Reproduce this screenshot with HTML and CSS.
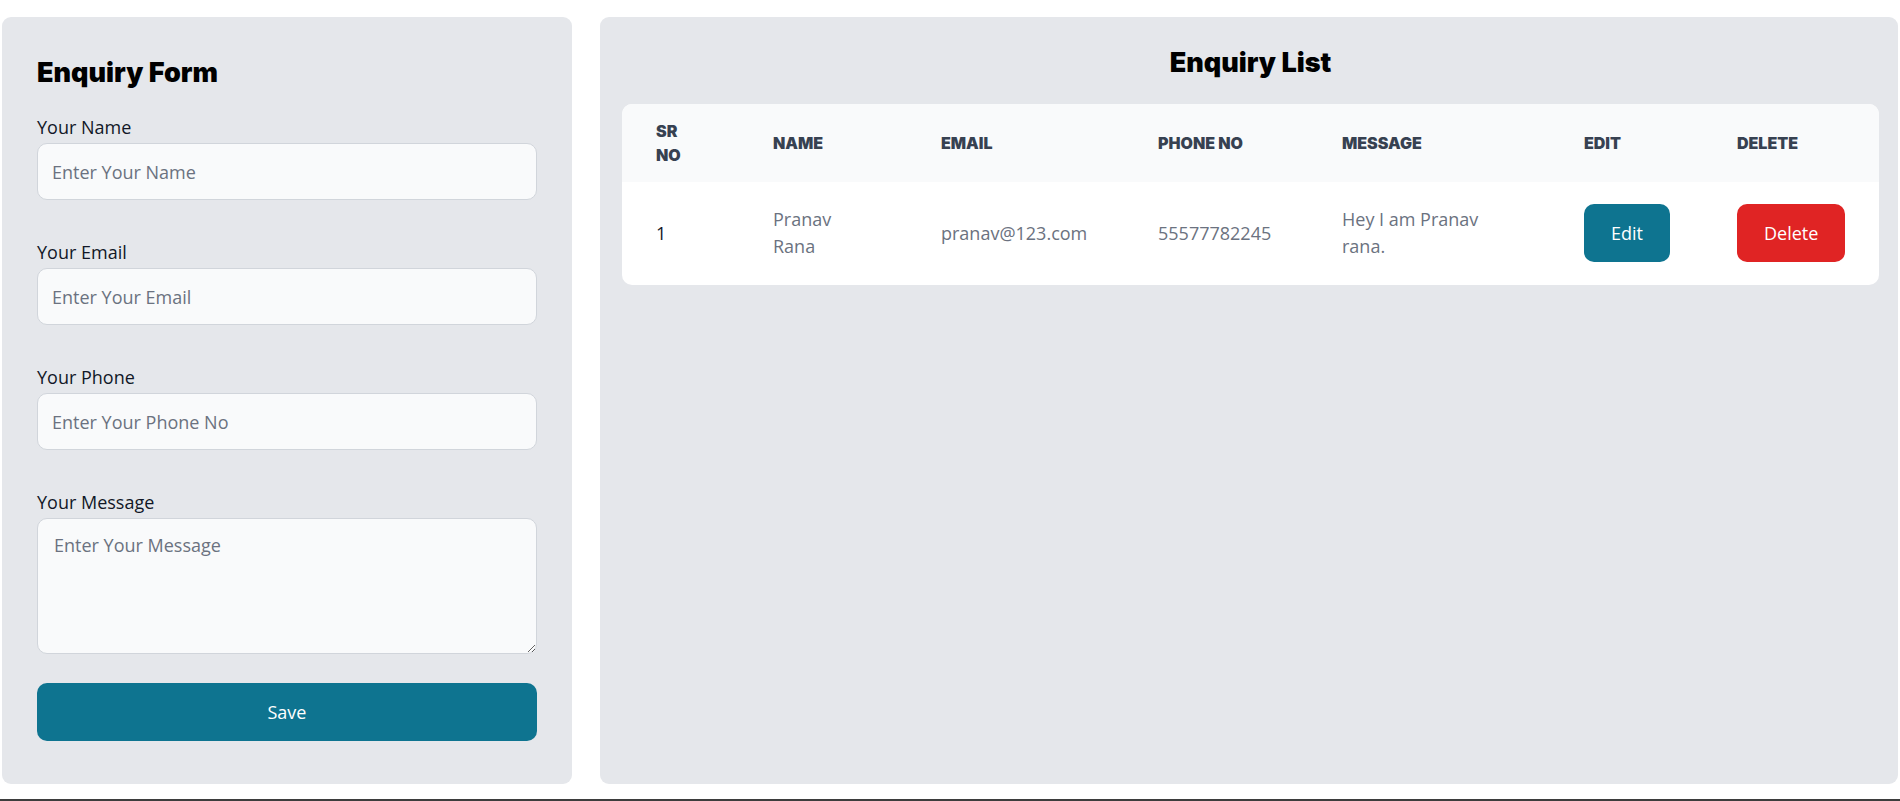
FILE: index.html
```html
<!DOCTYPE html>
<html lang="en">
<head>
<meta charset="utf-8">
<title>Enquiry</title>
<link rel="stylesheet" href="styles.css">
</head>
<body>
<div class="page">
  <section class="card form-card">
    <h2 class="title form-title">Enquiry Form</h2>
    <form class="form">
      <div class="field">
        <label class="label" for="name">Your Name</label>
        <input class="input" id="name" type="text" placeholder="Enter Your Name">
      </div>
      <div class="field">
        <label class="label" for="email">Your Email</label>
        <input class="input" id="email" type="email" placeholder="Enter Your Email">
      </div>
      <div class="field">
        <label class="label" for="phone">Your Phone</label>
        <input class="input" id="phone" type="text" placeholder="Enter Your Phone No">
      </div>
      <div class="field field-last">
        <label class="label" for="msg">Your Message</label>
        <textarea class="textarea" id="msg" placeholder="Enter Your Message"></textarea>
      </div>
      <button type="button" class="btn btn-save">Save</button>
    </form>
  </section>

  <section class="card list-card">
    <h2 class="title list-title">Enquiry List</h2>
    <div class="table-wrap">
      <table class="table">
        <thead>
          <tr>
            <th class="c-sr"><span class="sr-text">SR NO</span></th>
            <th class="c-name">Name</th>
            <th class="c-email">Email</th>
            <th class="c-phone">Phone No</th>
            <th class="c-msg">Message</th>
            <th class="c-edit">Edit</th>
            <th class="c-del">Delete</th>
          </tr>
        </thead>
        <tbody>
          <tr>
            <td class="cell-dark">1</td>
            <td class="cell-name">Pranav Rana</td>
            <td>pranav@123.com</td>
            <td>55577782245</td>
            <td class="cell-msg">Hey I am Pranav rana.</td>
            <td><button type="button" class="btn btn-edit">Edit</button></td>
            <td><button type="button" class="btn btn-delete">Delete</button></td>
          </tr>
        </tbody>
      </table>
    </div>
  </section>
</div>
</body>
</html>
```

FILE: styles.css
```css
html, body {
  margin: 0;
  padding: 0;
  background: #ffffff;
  overflow: hidden;
}

body {
  font-family: "Open Sans", "Noto Sans", sans-serif;
  color: #111827;
}

.page {
  box-sizing: border-box;
  height: 801px;
  display: flex;
  gap: 28px;
  padding: 17px 2px 15px 2px;
  border-bottom: 2px solid #3d3d3d;
}

.card {
  background: #e5e7eb;
  border-radius: 9px;
  box-sizing: border-box;
}

.form-card {
  width: 570px;
  flex: 0 0 570px;
  padding: 40px 35px 0 35px;
}

.list-card {
  flex: 1;
  min-width: 0;
  padding: 30px 19px 0 22px;
}

.title {
  margin: 0;
  font-family: "Inter", "Lato", sans-serif;
  font-weight: 900;
  font-size: 27px;
  line-height: 32px;
  color: #000000;
}

.form-title {
  margin-bottom: 26px;
}

.list-title {
  text-align: center;
  margin-bottom: 25px;
}

.form {
  display: flex;
  flex-direction: column;
}

.field {
  display: flex;
  flex-direction: column;
  margin-bottom: 40px;
}

.field-last {
  margin-bottom: 29px;
}

.label {
  font-size: 18px;
  line-height: 24px;
  margin-bottom: 4px;
  color: #111827;
}

.input,
.textarea {
  box-sizing: border-box;
  width: 500px;
  background: #f9fafb;
  border: 1px solid #d1d5db;
  border-radius: 10px;
  font-family: "Open Sans", "Noto Sans", sans-serif;
  font-size: 18px;
  color: #111827;
  outline: none;
  margin: 0;
}

.input {
  height: 57px;
  padding: 0 14px;
}

.textarea {
  height: 136px;
  padding: 13px 16px;
  line-height: 27px;
  resize: vertical;
}

.input::placeholder,
.textarea::placeholder {
  color: #6b7280;
  opacity: 1;
}

.btn {
  border: none;
  color: #ffffff;
  font-family: "Open Sans", "Noto Sans", sans-serif;
  font-size: 18px;
  border-radius: 10px;
  cursor: pointer;
  margin: 0;
}

.btn-save {
  width: 500px;
  height: 58px;
  background: #0e7490;
}

.btn-edit {
  height: 58px;
  padding: 0 27px;
  background: #0e7490;
}

.btn-delete {
  height: 58px;
  padding: 0 27px;
  background: #e02424;
}

.table-wrap {
  border-radius: 10px;
  overflow: hidden;
  background: #ffffff;
}

.table {
  width: 100%;
  border-collapse: collapse;
  table-layout: fixed;
}

.table th,
.table td {
  box-sizing: border-box;
}

.table th {
  background: #f9fafb;
  color: #374151;
  font-family: "Inter", "Lato", sans-serif;
  font-weight: 900;
  font-size: 16px;
  line-height: 24px;
  text-transform: uppercase;
  text-align: left;
  padding: 15px 10px 15px 34px;
  vertical-align: middle;
}

.sr-text {
  display: inline-block;
  width: 36px;
}

.table td {
  font-size: 18px;
  line-height: 27px;
  color: #6b7280;
  padding: 22px 10px 23px 34px;
  vertical-align: middle;
}

.table td.cell-dark {
  color: #111827;
}

.table td.cell-name {
  padding-right: 60px;
}

.table td.cell-msg {
  padding-right: 50px;
}

.c-sr { width: 117px; }
.c-name { width: 168px; }
.c-email { width: 217px; }
.c-phone { width: 184px; }
.c-msg { width: 242px; }
.c-edit { width: 153px; }
.c-del { width: 176px; }
```
